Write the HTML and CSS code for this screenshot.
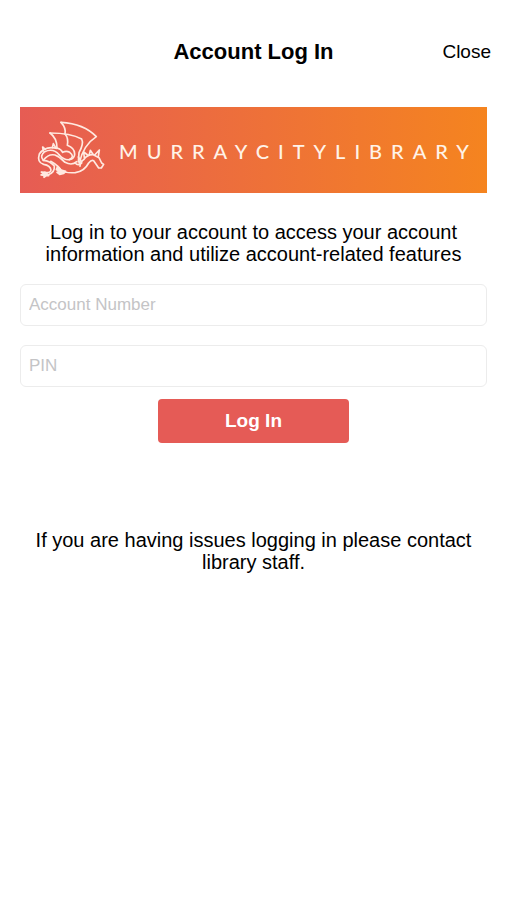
FILE: index.html
```
<!DOCTYPE html>
<html lang="en">
  <head>
    <meta charset="utf-8" />
    <meta name="viewport" content="width=device-width, initial-scale=1" />
    <title>Account Log In</title>
    <link rel="stylesheet" href="styles.css">
  </head>
  <body>
    <header class="top-bar">
      <h1>Account Log In</h1>
      <button class="close" type="button">Close</button>
    </header>
    <main>
      <div class="banner">
        <svg class="dragon" viewBox="0 0 270 228" aria-hidden="true">
          <!-- wings -->
          <path d="M96 31 Q165 35 202 74 Q163 99 151 153" />
          <path d="M96 31 Q112 48 108 66 Q119 78 115 100 Q137 108 137 126 Q137 140 121 143" />
          <path d="M63 63 Q125 63 158 81 Q165 95 150 122 L148 150" />
          <path d="M63 63 Q84 78 84 108 Q97 112 101 121 Q112 115 122 121 Q139 134 121 143 Q105 145 91 129" />
          <!-- body and tail -->
          <path d="M84 109 Q48 100 31 126 Q23 151 44 157 Q64 160 66 174 Q65 184 47 181" />
          <path d="M91 129 Q73 107 47 119 Q31 132 43 145 Q63 146 76 162 Q78 181 58 188" />
          <path d="M43 145 Q58 125 78 129 Q94 135 108 151 Q129 162 143 149" />
          <path d="M65 148 Q86 160 96 174 Q107 184 139 182 Q166 178 179 153 Q187 143 194 146 L209 168 L217 168 L224 157 L218 153 L210 137 L193 128 Q175 127 164 143 Q153 151 153 163" />
          <path d="M139 153 Q146 163 158 153 M148 135 L158 150" />
          <!-- spikes and horns -->
          <path d="M43 117 L41 105 L49 112 M70 107 L73 95 L80 107" />
          <path d="M166 137 L164 120 L176 129 M181 127 L184 115 L192 127 M197 129 L211 114 L208 133" />
          <!-- claws -->
          <path class="claw" d="M47 181 L37 180 L44 185 L36 189 L45 190 L45 196 L53 190 L59 191 L53 184 Z" />
          <path class="claw" d="M86 163 L82 173 L93 180 L84 181 L92 187 L104 184 L110 178 L96 174 Z" />
        </svg>
        <span class="library-name">MURRAYCITYLIBRARY</span>
      </div>
      <p class="intro">Log in to your account to access your account information and utilize account-related features</p>
      <form class="login-form">
        <input type="text" name="account" aria-label="Account Number" placeholder="Account Number" />
        <input type="password" name="pin" aria-label="PIN" placeholder="PIN" />
        <button class="log-in" type="submit">Log In</button>
      </form>
      <p class="help">If you are having issues logging in please contact library staff.</p>
    </main>
  </body>
</html>
```

FILE: styles.css
```
* {
  box-sizing: border-box;
}
body {
  margin: 0;
  background: #fff;
  color: #000;
  font-family: "Liberation Sans", Arial, sans-serif;
  font-size: 19px;
  line-height: 22px;
}
.top-bar {
  display: grid;
  grid-template-columns: 1fr auto 1fr;
  align-items: center;
  padding: 40px 16px 0;
}
.top-bar h1 {
  grid-column: 2;
  margin: 0;
  font-size: 22px;
  line-height: 24px;
}
.close {
  justify-self: end;
  padding: 0;
  border: 0;
  background: none;
  color: inherit;
  font: inherit;
}
main {
  padding: 43px 20px 0;
}
.banner {
  display: flex;
  align-items: center;
  height: 86px;
  padding: 0 9px;
  background: linear-gradient(to right, #e65c54, #f5841f);
  color: #fff3e8;
}
.dragon {
  flex: none;
  width: 90px;
  height: 76px;
  fill: none;
  stroke: #ffe9e0;
  stroke-width: 5;
  stroke-linejoin: round;
  stroke-linecap: round;
}
.claw {
  fill: #ffe9e0;
}
.library-name {
  padding-top: 2px;
  font-family: Lato, sans-serif;
  font-size: 20px;
  font-weight: 500;
  letter-spacing: 9px;
}
.intro,
.help {
  margin: 0 auto;
  max-width: 450px;
  font-size: 20px;
  text-align: center;
}
.intro {
  padding: 28px 0 19px;
}
.login-form {
  display: flex;
  flex-direction: column;
}
.login-form input {
  height: 42px;
  margin-bottom: 19px;
  padding: 0 8px;
  border: 1px solid #ececec;
  border-radius: 6px;
  background: #fff;
  font: inherit;
  font-size: 17px;
}
.login-form input::placeholder {
  color: #c4c4c6;
}
.log-in {
  align-self: center;
  width: 41%;
  height: 44px;
  margin-top: -7px;
  border: 0;
  border-radius: 4px;
  background: #e55b56;
  color: #fff;
  font: inherit;
  font-weight: bold;
}
.help {
  padding-top: 86px;
}
```
